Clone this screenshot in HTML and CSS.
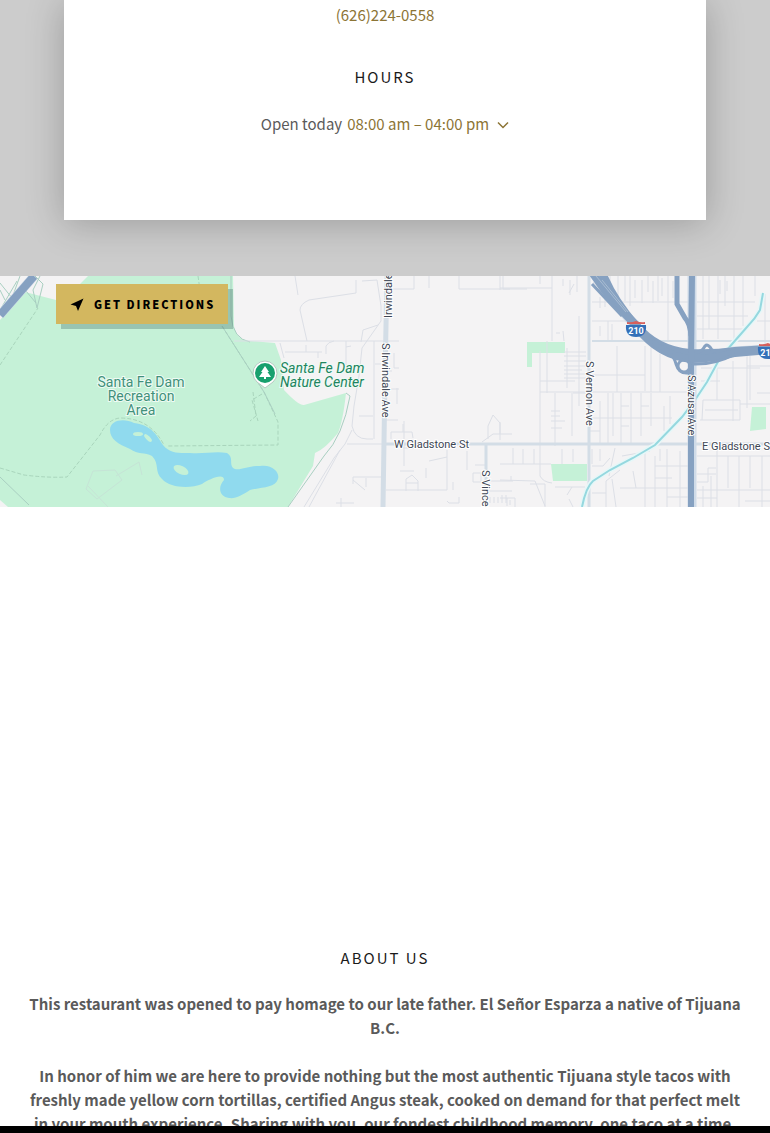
FILE: index.html
```
<!DOCTYPE html>
<html lang="en">
<head>
    <meta charset="utf-8">
    <meta name="viewport" content="width=device-width, initial-scale=1">
    <title>Contact &amp; About Us</title>
    <link rel="stylesheet" href="styles.css">
</head>
<body>
    <main class="content">
        <section class="contact">
            <div class="contact-card">
                <a class="phone" href="tel:6262240558">(626)224-0558</a>
                <h4 class="heading">Hours</h4>
                <div class="hours">
                    <span>Open today</span>
                    <button type="button" class="hours-toggle">
                        08:00 am – 04:00 pm
                        <svg class="chevron" viewBox="0 0 12 8" aria-hidden="true"><path d="M1 1.5 L6 6.5 L11 1.5"/></svg>
                    </button>
                </div>
            </div>
        </section>

        <section class="map">
            <svg class="map-canvas" viewBox="0 0 770 231" preserveAspectRatio="xMidYMid slice" role="img" aria-label="Map">
                <rect class="land" width="770" height="231"/>

                <!-- parks -->
                <g class="park">
                    <path d="M0 44 L25 16 L56 24 L80 8 L88 0 H233 L234 50 Q236 64 250 65 L275 67 L281 84 L284 114 Q299 130 304 129 L346 117 Q343 145 338 157 Q325 173 315 177 L313 190 L288 231 H8 L0 224Z"/>
                    <path d="M527 66 H565 V77 H532 V91 H527Z"/>
                    <path d="M551 188 H587 V205 H553Z"/>
                    <path d="M752 131 H766 V153 L750 155Z"/>
                </g>

                <!-- trails -->
                <g class="trail">
                    <path d="M198 0 L200 14 M222 50 L264 116 L278 146 V169 L168 170"/>
                    <path d="M0 192 L24 199 Q48 202 67 201 L100 159 Q108 143 120 142 Q150 142 164 169"/>
                    <path d="M0 89 L22 56 L38 32 M253 116 L256 140 L250 145 M262 118 L252 124 L258 145"/>
                </g>
                <g class="path">
                    <path d="M222 50 L264 116 L275 138 M0 201 L29 229 M346 117 L350 120 Q343 160 324 180 L288 231"/>
                    <path d="M35 0 L43 8 L37 32 L33 14 L40 0 M26 15 L36 27 M0 7 L12 22 L20 0 M5 24 L0 14 M0 34 L17 5"/>
                    <path d="M231 0 V40 Q233 63 250 66"/>
                </g>
                <path class="faint" d="M86 213 L93 195 L115 194 L122 204 L97 223 Z M88 210 L108 231 M116 200 L139 186 L142 199"/>

                <!-- lake -->
                <path class="water" d="M110 154 C110 144 124 142 134 147 C152 149 157 160 163 169 C170 178 180 177 190 177 C205 178 215 175 227 177 C234 181 229 188 233 192 C238 196 250 189 260 190 C273 188 280 197 278 203 C275 212 262 211 250 214 C242 219 236 223 229 222 C220 221 217 212 224 204 C224 196 208 204 202 208 C190 213 170 212 162 203 C154 196 160 188 152 180 C145 176 138 179 130 173 C118 168 110 163 110 154Z"/>
                <g class="park">
                    <ellipse cx="138" cy="158" rx="5" ry="2"/>
                    <ellipse cx="148" cy="162" rx="5" ry="2" transform="rotate(45 148 162)"/>
                    <ellipse cx="181" cy="194" rx="8" ry="4" transform="rotate(25 181 194)"/>
                </g>

                <!-- minor streets, west half -->
                <g class="street">
                    <path d="M234 65 H399 M295 0 L298 19 M356 4 V17 L309 24 Q300 28 300 34 L307 65"/>
                    <path d="M280 67 L284 82 M285 76 H322 M306 69 V76 M318 82 V76 M326 78 V70 Q328 66 334 65 M346 65 V89 M362 5 L377 4 L381 30 V45 L362 72 L359 100 L354 130 L352 150 Q355 163 367 163 H373"/>
                    <path d="M374 65 V163 M361 66 L363 54 L378 49 M346 71 L351 70 M359 140 H373 M375 88 H382 M352 154 L345 168 L334 182 L304 231 M347 168 H385 M340 174 L309 231"/>
                    <path d="M353 208 V201 H381 M353 204 L365 214 M366 202 V211 M336 227 H354 M341 222 V231 M394 77 V92 H399 M386 113 H399 M397 112 V128 M386 95 H392 M386 144 H398"/>
                    <path d="M393 13 H414 V0 M429 0 V12 M459 0 V13 H510 M503 0 V13 H527 M391 163 V156 H412 L413 162 M404 145 V190 M403 156 V148 M416 172 H400 M386 214 H447 V174 M429 185 L447 181 M426 192 V202"/>
                    <path d="M406 215 V203 L412 199 L418 205 V215 M406 207 H418 M400 195 H414 M447 225 L449 227 H459 V221 M453 206 V214 M467 175 V194 M473 197 H481 V206 H473 Z M488 163 V150 L493 139 L500 147 V164 M482 166 L493 158 H512"/>
                    <path d="M486 205 H513 M490 221 V227 M494 221 V227 M498 221 V227 M502 219 V227 M506 219 V227 M475 189 H486 M487 215 H512"/>
                </g>

                <!-- minor streets, east half -->
                <g class="street">
                    <path d="M500 12 H552 M552 0 V65 M500 0 V14 M563 55 L564 65 M556 57 H560 M579 40 V130 M540 0 V8 M563 3 V10 M570 4 V19 M574 8 L569 17 M577 0 V16"/>
                    <path d="M540 75 V200 Q543 206 552 207 M547 65 V117 M540 116 H690 M540 105 H575 M564 76 H586 M564 80 H586 M564 85 H586 M564 90 H586 M564 94 H582 M564 98 H586 M564 102 H586 M567 72 V112"/>
                    <path d="M555 117 V170 M572 117 V160 M573 117 H590 M551 135 H560 M551 140 H560 M551 145 H565 M551 152 H562 M500 146 V158 M500 188 H551 M513 172 V188 M523 173 V188 M534 173 V188 M562 173 V188 M573 173 V186"/>
                    <path d="M500 204 L535 205 L545 230 M530 208 H545 V231 M500 222 H515 V231 M507 222 V230 M510 224 V229 M567 219 L572 211 M569 223 L573 231 M555 211 H585"/>
                    <path d="M592 26 H688 M610 0 V26 M600 21 V32 M605 20 V31 M618 0 V28 M625 0 V25 M630 0 V30 M635 4 V22 M642 4 V27 M648 0 V16 M653 5 V27 M658 0 V25 M662 2 V20 M668 0 V64 M673 5 V22"/>
                    <path d="M592 45 H629 M608 45 V64 M612 48 V64 M600 50 V60 M617 70 V116 M645 70 V115 M651 70 V116 M660 78 V116 M592 99 H645 M608 117 V169 M600 125 V169 M613 117 V160 M621 117 V169 M631 117 V169 M641 117 V160 M651 117 V150 M592 142 H672 M670 120 V148 M664 130 V155"/>
                    <path d="M697 26 H755 M703 0 V63 M709 0 V53 M718 0 V63 M725 0 V30 M734 0 V65 M743 0 V50 M720 4 V18 M727 5 V15 M697 40 H748 M697 53 H745 M755 0 V20 M765 18 V70 M757 45 H770"/>
                    <path d="M701 92 H760 M701 105 H720 M717 80 V124 M733 85 V145 M747 80 V132 M702 144 L703 124 H740 V144 H700 M705 134 H738 M740 128 H770 M750 80 V124 M757 117 H770 M747 90 H770"/>
                    <path d="M592 173 V188 M600 173 V185 M609 200 L615 172 M606 231 V205 L620 194 M616 231 L612 203 M620 212 H690 M645 175 V231 M633 195 L636 212 M655 180 V231 M667 173 V231 M680 175 V231 M622 180 L650 175 M592 217 H606 M655 190 H688 M655 202 H672 M667 221 H688 M660 173 V185"/>
                    <path d="M697 180 H770 M697 214 H770 M717 173 V231 M728 180 V212 M739 180 V231 M750 180 V212 M762 180 V231 M697 198 H716 M697 206 H708 V192 H716 M703 210 V231 M711 200 V231 M697 222 H717 M745 225 H770"/>
                    <path d="M592 190 H603 L610 182 M593 6 L604 16 M511 205 V200 M590 155 H600 M621 130 H629 M621 150 H629 M641 130 H649"/>
                </g>

                <!-- main roads -->
                <g class="road">
                    <path class="road-wide" d="M387 0 L385 100 L383 231"/>
                    <path d="M385 168 H770"/>
                    <path d="M589 0 V231"/>
                    <path d="M486 168 V231"/>
                    <path class="road-thin" d="M592 65 H770"/>
                </g>

                <!-- river -->
                <path class="river-bank" d="M763 17 L760 34 Q755 43 747 51 L733 67 L720 82 L707 106 L695 124 L682 141 L655 169 L633 182 L610 194 L593 205 Q586 211 582 231"/>
                <path class="river" d="M763 17 L760 34 Q755 43 747 51 L733 67 L720 82 L707 106 L695 124 L682 141 L655 169 L633 182 L610 194 L593 205 Q586 211 582 231"/>

                <!-- freeways -->
                <g class="freeway-edge">
                    <path d="M34 0 L0 39"/>
                    <path d="M594 -4 Q612 26 636 50 Q656 77 690 80 Q712 80 735 75 L770 73"/>
                    <path d="M692 0 V231"/>
                </g>
                <g class="freeway">
                    <path d="M34 0 L0 39"/>
                    <path d="M592 -4 Q610 24 636 49 Q656 74 690 77 Q714 78 735 75 L770 73"/>
                    <path d="M602 -4 Q612 22 636 50 Q658 80 692 83 Q712 83 735 77 L770 74"/>
                    <path class="south" d="M692 0 L691 90 L691 231"/>
                </g>
                <g class="ramp">
                    <path class="ramp-wide" d="M677 0 V28 L685 42 Q690 47 691 60"/>
                    <path d="M592 8 L622 40"/>
                    <path d="M643 57 Q656 70 669 77 Q674 80 676 88 Q679 98 688 97"/>
                    <circle cx="684" cy="90" r="6"/>
                    <path d="M696 76 Q702 76 705 70 Q708 67 712 74 L717 76"/>
                    <path d="M692 88 Q715 89 735 78"/>
                </g>
                <path class="lane" d="M596 0 L626 36 M602 4 L628 36"/>

                <!-- interstate shields -->
                <g>
                    <path class="shield" d="M626 49 H646 Q647 61 636 61 Q625 61 626 49Z"/>
                    <path class="shield-top" d="M627 46 Q631 47 636 45 Q641 47 645 46 V48 H627Z"/>
                    <text class="shield-text" x="636" y="58">210</text>
                </g>
                <g>
                    <path class="shield" d="M758 71 H778 Q779 83 768 83 Q757 83 758 71Z"/>
                    <path class="shield-top" d="M759 68 Q763 69 768 67 Q773 69 777 68 V70 H759Z"/>
                    <text class="shield-text" x="768" y="80">210</text>
                </g>

                <!-- labels -->
                <text class="label-park" x="141" y="111">Santa Fe Dam</text>
                <text class="label-park" x="141" y="125">Recreation</text>
                <text class="label-park" x="141" y="139">Area</text>

                <path class="pin" d="M265 112 L257 106 A12 12 0 1 1 273 106 Z"/>
                <circle class="pin-dot" cx="265" cy="97" r="10"/>
                <path class="pin-tree" d="M265 90 L269 96 H267.500 L271 101 H266 V103 H264 V101 H259 L262.500 96 H261Z"/>
                <text class="label-poi" x="280" y="97">Santa Fe Dam</text>
                <text class="label-poi" x="280" y="111">Nature Center</text>

                <text class="label-road" transform="translate(392 42) rotate(-90)">Irwindale Ave</text>
                <text class="label-road" transform="translate(382 67) rotate(90)">S Irwindale Ave</text>
                <text class="label-road" transform="translate(586 85) rotate(90)">S Vernon Ave</text>
                <text class="label-road" transform="translate(688 99) rotate(90)">S Azusa Ave</text>
                <text class="label-road" transform="translate(482 194) rotate(90)">S Vincent Ave</text>
                <text class="label-road" x="394" y="172">W Gladstone St</text>
                <text class="label-road" x="702" y="174">E Gladstone St</text>
            </svg>
            <a class="directions" href="#directions">
                <svg class="directions-icon" viewBox="0 0 14 14" aria-hidden="true"><path d="M13.500 1.500 L8 14 L6 9 L0.500 7.500 Z"/></svg>
                Get directions
            </a>
        </section>

        <section class="about">
            <h4 class="heading">About us</h4>
            <p>This restaurant was opened to pay homage to our late father. El Señor Esparza a native of Tijuana B.C.</p>
            <p>In honor of him we are here to provide nothing but the most authentic Tijuana style tacos with freshly made yellow corn tortillas, certified Angus steak, cooked on demand for that perfect melt in your mouth experience. Sharing with you, our fondest childhood memory, one taco at a time.</p>
        </section>
    </main>
    <footer class="bottom-bar"></footer>
</body>
</html>
```

FILE: styles.css
```
* {
    box-sizing: border-box;
}
body {
    margin: 0;
    height: 100vh;
    display: flex;
    flex-direction: column;
    background-color: #fff;
    color: #5a5a5a;
    font-family: "Source Sans Pro", "Noto Sans CJK SC", sans-serif;
    font-size: 15px;
    line-height: 24px;
}
.content {
    flex: 1;
    min-height: 0;
    overflow: hidden;
}
.heading {
    margin: 0;
    color: #1b1b1b;
    font-size: 15px;
    font-weight: 400;
    letter-spacing: 2px;
    text-transform: uppercase;
}

/* contact card */
.contact {
    padding: 0 64px 56px;
    background-color: #ccc;
    overflow: hidden;
}
.contact-card {
    display: flex;
    flex-direction: column;
    align-items: center;
    padding: 3px 24px 84px;
    background-color: #fff;
    box-shadow: 0 3px 36px rgba(0, 0, 0, 0.24);
}
.phone {
    color: #8c7435;
    text-decoration: none;
}
.contact-card .heading {
    margin: 38px 0 23px;
}
.hours {
    display: flex;
    gap: 5px;
}
.hours-toggle {
    display: flex;
    align-items: center;
    gap: 8px;
    padding: 0;
    border: none;
    background: none;
    color: #8c7435;
    font: inherit;
    cursor: pointer;
}
.chevron {
    width: 12px;
    height: 8px;
    margin-top: 2px;
    fill: none;
    stroke: #8c7435;
    stroke-width: 1.5;
}

/* map */
.map {
    position: relative;
    height: 231px;
    overflow: hidden;
}
.map-canvas {
    display: block;
    width: 100%;
    height: 100%;
    font-family: Roboto, sans-serif;
}
.land {
    fill: #f4f3f4;
}
.park {
    fill: #c5f1d7;
}
.water {
    fill: #90daee;
}
.trail,
.path,
.faint,
.street,
.road,
.river,
.river-bank,
.freeway,
.freeway-edge,
.ramp,
.lane {
    fill: none;
}
.trail {
    stroke: #a9d5bc;
    stroke-dasharray: 4 2;
}
.path {
    stroke: #a9cfc1;
}
.faint {
    stroke: #c6e4d6;
}
.street {
    stroke: #dcdfe6;
}
.road {
    stroke: #d3dde6;
    stroke-width: 3;
}
.road-wide {
    stroke-width: 5;
}
.road-thin {
    stroke-width: 2;
}
.river-bank {
    stroke: #e6f7f8;
    stroke-width: 5;
}
.river {
    stroke: #95d8df;
    stroke-width: 2;
}
.freeway-edge {
    stroke: #cfdbe8;
    stroke-width: 9;
}
.freeway {
    stroke: #86a1c1;
    stroke-width: 8;
}
.south {
    stroke-width: 6;
}
.ramp {
    stroke: #86a1c1;
    stroke-width: 3;
}
.ramp-wide {
    stroke-width: 5;
}
.lane {
    stroke: #a9bdd2;
}
.shield {
    fill: #3470b8;
}
.shield-top {
    fill: #d6605c;
}
.shield-text {
    fill: #fff;
    font-size: 9px;
    font-weight: 700;
    text-anchor: middle;
}
.label-park,
.label-poi {
    fill: #41907a;
    stroke: #effbf4;
    stroke-width: 2;
    paint-order: stroke;
    font-size: 14px;
    text-anchor: middle;
}
.label-poi {
    fill: #21845f;
    font-style: italic;
    text-anchor: start;
}
.label-road {
    fill: #3d4654;
    stroke: #fff;
    stroke-width: 2;
    paint-order: stroke;
    font-size: 11px;
}
.pin {
    fill: #fff;
    stroke: #b5c9c0;
}
.pin-dot {
    fill: #18a06e;
}
.pin-tree {
    fill: #fff;
}
.directions {
    position: absolute;
    top: 8px;
    left: 56px;
    display: flex;
    align-items: center;
    gap: 10px;
    height: 40px;
    padding: 0 13px 0 14px;
    background-color: #d3b75f;
    box-shadow: 5px 5px 0 rgba(88, 130, 120, 0.4);
    color: #000;
    font-size: 11px;
    font-weight: 900;
    letter-spacing: 2px;
    text-decoration: none;
    text-transform: uppercase;
    white-space: nowrap;
}
.directions-icon {
    width: 14px;
    height: 14px;
}

/* about */
.about {
    padding: 439px 24px 24px;
    text-align: center;
}
.about p {
    margin: 0 0 24px;
    font-weight: 700;
}
.about .heading {
    margin-bottom: 22px;
}

.bottom-bar {
    height: 7px;
    background-color: #000;
}
```
